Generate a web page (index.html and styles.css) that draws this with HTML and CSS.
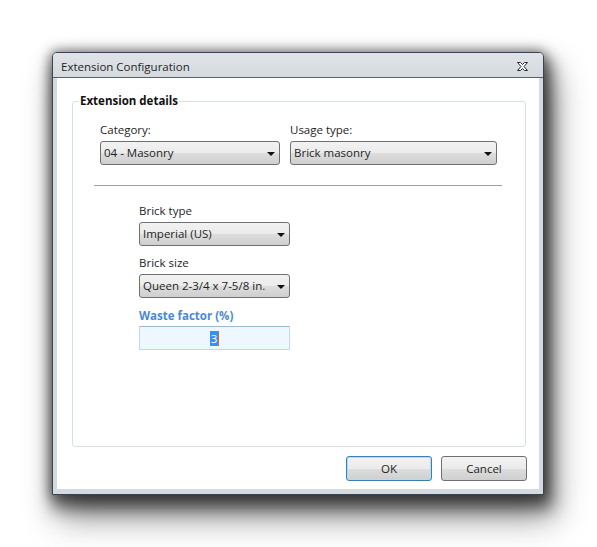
FILE: index.html
```html
<!DOCTYPE html>
<html lang="en">
<head>
<meta charset="utf-8">
<title>Extension Configuration</title>
<link rel="stylesheet" href="styles.css">
</head>
<body>
<div class="desktop">
  <div class="window">
    <div class="titlebar">
      <span class="title">Extension Configuration</span>
      <span class="close" aria-label="Close">
        <svg width="11" height="9" viewBox="0 0 11 9"><polygon points="0.5,0.5 3.5,0.5 5.5,2.5 7.5,0.5 10.5,0.5 7,4.5 10.5,8.5 7.5,8.5 5.5,6.5 3.5,8.5 0.5,8.5 4,4.5" fill="#ffffff" stroke="#2a2a2a" stroke-width="1"/></svg>
      </span>
    </div>
    <div class="frame">
      <div class="client">
        <fieldset class="group">
          <legend class="group-title">Extension details</legend>
          <div class="row-top">
            <div class="field">
              <label class="label">Category:</label>
              <div class="combo combo-category"><span class="combo-text">04 - Masonry</span><span class="arrow"></span></div>
            </div>
            <div class="field">
              <label class="label">Usage type:</label>
              <div class="combo combo-usage"><span class="combo-text">Brick masonry</span><span class="arrow"></span></div>
            </div>
          </div>
          <div class="separator"></div>
          <div class="stack">
            <div class="field">
              <label class="label">Brick type</label>
              <div class="combo combo-small"><span class="combo-text">Imperial (US)</span><span class="arrow"></span></div>
            </div>
            <div class="field">
              <label class="label">Brick size</label>
              <div class="combo combo-small"><span class="combo-text">Queen 2-3/4 x 7-5/8 in.</span><span class="arrow"></span></div>
            </div>
            <div class="field">
              <label class="label label-focus">Waste factor (%)</label>
              <div class="textbox"><span class="selected">3</span><span class="caret"></span></div>
            </div>
          </div>
        </fieldset>
        <div class="buttons">
          <button class="btn btn-default">OK</button>
          <button class="btn">Cancel</button>
        </div>
      </div>
    </div>
  </div>
</div>
</body>
</html>
```

FILE: styles.css
```css
html, body {
  margin: 0;
  padding: 0;
  background: #ffffff;
}

body {
  font-family: "Open Sans", "Noto Sans", sans-serif;
  font-size: 11.5px;
  color: #1e1e1e;
}

.desktop {
  padding: 52px 0 60px 52px;
}

/* Window chrome with its drop shadow */
.window {
  width: 490px;
  height: 441px;
  border: 1px solid #3a4450;
  border-radius: 5px 5px 0 0;
  background: #d4dade;
  box-shadow:
    0 0 12px 2px rgba(0, 0, 0, 0.4),
    4px 10px 16px 4px rgba(0, 0, 0, 0.5),
    8px 20px 34px 2px rgba(0, 0, 0, 0.45);
  display: flex;
  flex-direction: column;
}

.titlebar {
  height: 25px;
  box-sizing: border-box;
  border-bottom: 1px solid #56606b;
  border-radius: 4px 4px 0 0;
  background: linear-gradient(#e0e4e8, #d5dade);
  display: flex;
  align-items: center;
  justify-content: space-between;
  padding: 3px 15px 0 8px;
}

.title {
  font-size: 11.5px;
  color: #1f1f1f;
  line-height: 16px;
}

.close {
  display: flex;
  width: 11px;
  height: 9px;
  margin-top: -1px;
}

.frame {
  flex: 1;
  padding: 0 4px 5px 4px;
  display: flex;
}

.client {
  flex: 1;
  background: #ffffff;
  display: flex;
  flex-direction: column;
}

/* Group box */
.group {
  margin: 15px 13px 0 15px;
  padding: 13px 0 0 27px;
  height: 354px;
  box-sizing: border-box;
  border: 1px solid #d5dfe5;
  border-radius: 3px;
  min-width: 0;
}

.group-title {
  font-weight: bold;
  font-size: 11.5px;
  line-height: 16px;
  padding: 0 1px;
  margin-left: -21px;
  color: #111111;
}

.row-top {
  display: flex;
  gap: 10px;
}

.field {
  display: flex;
  flex-direction: column;
}

.label {
  line-height: 16px;
  margin-bottom: 3px;
}

.label-focus {
  color: #4a8ad4;
  font-weight: bold;
  margin-top: 1px;
  margin-bottom: 2px;
}

/* Drop-down lists */
.combo {
  height: 24px;
  box-sizing: border-box;
  border: 1px solid #707070;
  border-radius: 3px;
  background: linear-gradient(#f2f2f2 0%, #ebebeb 50%, #dddddd 51%, #cfcfcf 100%);
  display: flex;
  align-items: center;
  justify-content: space-between;
  padding: 0 4px 0 3px;
}

.combo-text {
  line-height: 16px;
  white-space: nowrap;
}

.combo-category { width: 180px; }
.combo-usage { width: 207px; }
.combo-small { width: 151px; }

.arrow {
  flex: none;
  width: 0;
  height: 0;
  border-left: 4px solid transparent;
  border-right: 4px solid transparent;
  border-top: 4px solid #111111;
  margin-top: 1px;
}

.separator {
  height: 1px;
  background: #a0a0a0;
  margin: 20px 23px 0 -6px;
}

.stack {
  margin: 17px 0 0 39px;
  display: flex;
  flex-direction: column;
  gap: 9px;
}

/* Edit box */
.textbox {
  width: 151px;
  height: 24px;
  box-sizing: border-box;
  border: 1px solid #c5d6e6;
  border-top-color: #9db8d3;
  background: #eef6fe;
  display: flex;
  align-items: center;
  justify-content: center;
}

.selected {
  background: #3390ff;
  color: #ffffff;
  line-height: 15px;
  padding: 0 1px;
}

.caret {
  width: 1px;
  height: 15px;
  background: #d86a1e;
}

/* Dialog buttons */
.buttons {
  display: flex;
  justify-content: flex-end;
  gap: 9px;
  padding: 9px 12px 0 0;
}

.btn {
  width: 86px;
  height: 25px;
  box-sizing: border-box;
  font-family: inherit;
  font-size: 11.5px;
  color: #1e1e1e;
  border: 1px solid #707070;
  border-radius: 3px;
  background: linear-gradient(#f2f2f2 0%, #ebebeb 50%, #dddddd 51%, #cfcfcf 100%);
  padding: 0;
}

.btn-default {
  border-color: #3c7fb1;
  box-shadow: inset 0 0 0 1px #a8e2f8;
}
```
